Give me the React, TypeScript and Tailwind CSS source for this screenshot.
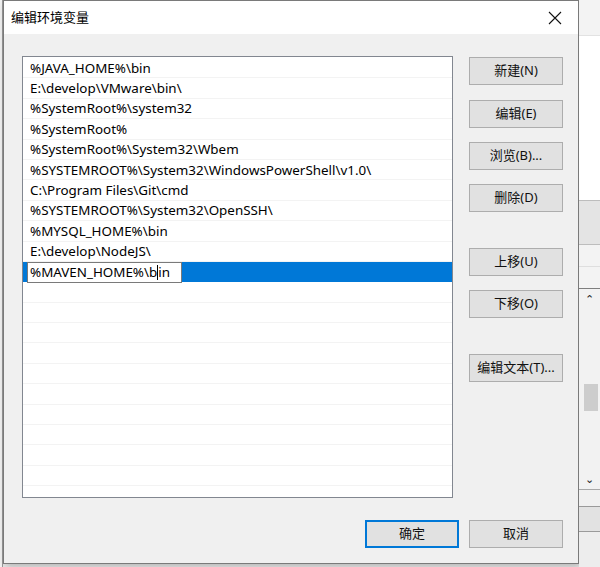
import React from 'react';

const paths = [
  '%JAVA_HOME%\\bin',
  'E:\\develop\\VMware\\bin\\',
  '%SystemRoot%\\system32',
  '%SystemRoot%',
  '%SystemRoot%\\System32\\Wbem',
  '%SYSTEMROOT%\\System32\\WindowsPowerShell\\v1.0\\',
  'C:\\Program Files\\Git\\cmd',
  '%SYSTEMROOT%\\System32\\OpenSSH\\',
  '%MYSQL_HOME%\\bin',
  'E:\\develop\\NodeJS\\',
];

const font = { fontFamily: '"Noto Sans", "Noto Sans CJK SC", sans-serif' };

const WinButton = ({ label, primary }: { label: string; primary?: boolean }) => (
  <button
    className={`h-[28px] w-[94px] text-[13px] text-[#111] bg-[#e1e1e1] ${
      primary ? 'border-2 border-[#0078d7]' : 'border border-[#adadad]'
    }`}
  >
    {label}
  </button>
);

export default function App() {
  const emptyRows = Array.from({ length: 10 });

  return (
    <div className="w-[600px] h-[567px] flex overflow-hidden bg-[#e9e9e9]" style={font}>
      {/* edge of the window behind, left side */}
      <div className="w-[3px] h-full bg-[#f4f4f4] border-r border-[#9a9a9a]" />

      {/* dialog */}
      <div className="w-[576px] h-[564px] flex flex-col bg-[#f0f0f0] border border-[#7a7a7a] shadow-[2px_2px_8px_rgba(0,0,0,0.25)]">
        <div className="h-[33px] bg-white flex items-center justify-between pl-[7px] pr-[10px] shrink-0">
          <span className="text-[13px] text-black">编辑环境变量</span>
          <svg width="14" height="14" viewBox="0 0 14 14" className="mr-[6px]">
            <path d="M1 1 L13 13 M13 1 L1 13" stroke="#111" strokeWidth="1.1" fill="none" />
          </svg>
        </div>

        <div className="flex-1 flex flex-col pl-[18px] pr-[15px] pt-[22px]">
          <div className="flex gap-[16px]">
            {/* list */}
            <div className="w-[431px] h-[442px] bg-white border border-[#828790] overflow-hidden pt-[1px]">
              {paths.map((p) => (
                <div key={p} className="h-[20.4px] flex items-center pl-[7px] border-b border-[#f3f3f3] text-[13.4px] text-black whitespace-nowrap">
                  {p}
                </div>
              ))}
              <div className="h-[20.4px] flex items-center pl-[4px] bg-[#0078d7]">
                <div className="h-[21px] w-[155px] bg-white border border-[#7a7a7a] flex items-center pl-[2px] text-[13.4px] text-black whitespace-nowrap">
                  %MAVEN_HOME%\b
                  <span className="inline-block w-[1px] h-[15px] bg-black" />
                  in
                </div>
              </div>
              {emptyRows.map((_, i) => (
                <div key={i} className="h-[20.4px] border-b border-[#f3f3f3]" />
              ))}
            </div>

            {/* side buttons */}
            <div className="flex flex-col pt-[1px]">
              <WinButton label="新建(N)" />
              <div className="h-[15px]" />
              <WinButton label="编辑(E)" />
              <div className="h-[14px]" />
              <WinButton label="浏览(B)..." />
              <div className="h-[14px]" />
              <WinButton label="删除(D)" />
              <div className="h-[36px]" />
              <WinButton label="上移(U)" />
              <div className="h-[14px]" />
              <WinButton label="下移(O)" />
              <div className="h-[36px]" />
              <WinButton label="编辑文本(T)..." />
            </div>
          </div>

          <div className="flex justify-end gap-[10px] mt-[22px]">
            <WinButton label="确定" primary />
            <WinButton label="取消" />
          </div>
        </div>
      </div>

      {/* window behind, right side */}
      <div className="flex-1 h-full flex flex-col bg-[#f7f7f7]">
        <div className="h-[36px] bg-[#f3f3f3] border-b border-[#e2e2e2]" />
        <div className="h-[164px] bg-white" />
        <div className="h-[45px] bg-[#e4e4e4] border-y border-[#bdbdbd]" />
        <div className="h-[22px] bg-[#f3f3f3] border-b border-[#dedede]" />
        <div className="h-[22px] bg-[#f3f3f3] border-b border-[#7e7e7e]" />
        <div className="h-[200px] bg-[#f2f2f2] flex flex-col items-center pt-[4px] text-[11px] leading-none text-[#222]">
          <span>⌃</span>
          <div className="w-[14px] h-[27px] bg-[#cdcdcd] mt-[80px] ml-[3px]" />
          <span className="mt-[62px]">⌄</span>
        </div>
        <div className="h-[17px] bg-[#f0f0f0] border-t border-[#a8a8a8]" />
        <div className="h-[26px] bg-[#e2e2e2] border-y border-[#9a9a9a]" />
        <div className="flex-1 bg-[#ededed]" />
      </div>
    </div>
  );
}
